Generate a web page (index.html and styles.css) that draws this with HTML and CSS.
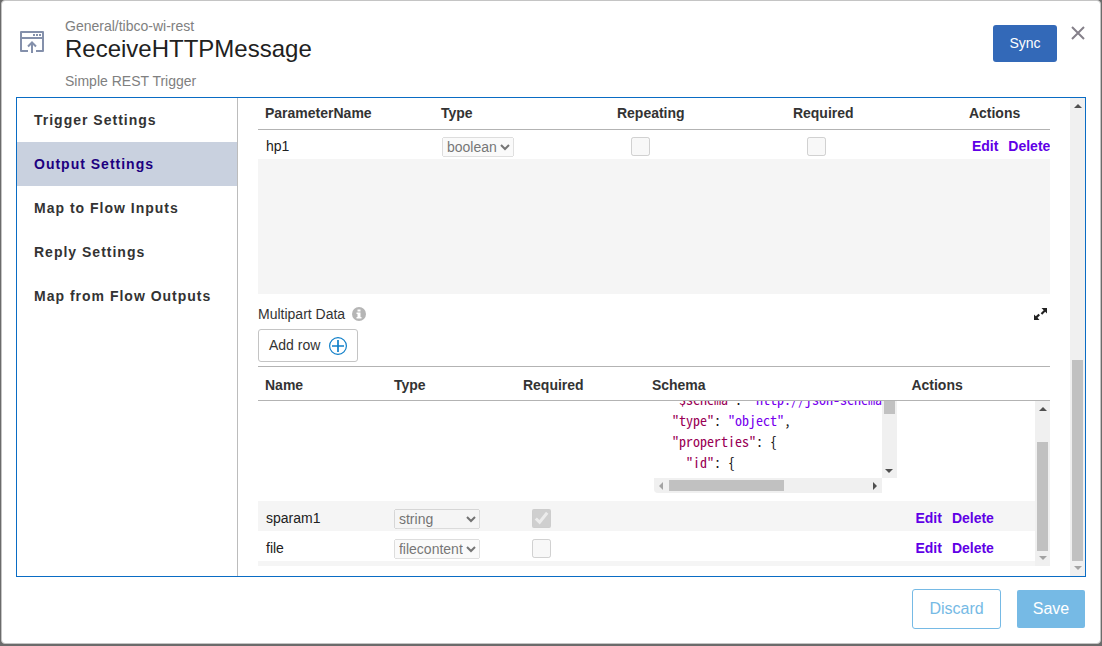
FILE: index.html
```html
<!DOCTYPE html>
<html lang="en">
<head>
<meta charset="utf-8">
<title>ReceiveHTTPMessage</title>
<link rel="stylesheet" href="styles.css">
</head>
<body>
<main class="modal">
  <header class="header">
    <svg class="trigger-icon" width="24" height="22" viewBox="0 0 24 22" fill="none" stroke="#8490ab">
      <path d="M8 20H1V1h22v19h-7M1 7h22" stroke-width="2" stroke-linejoin="round"/>
      <path d="M13 4h2M16 4h2M19 4h2" stroke-width="2"/>
      <path d="M12 22V11M8 15.500l4-4 4 4" stroke-width="2"/>
    </svg>
    <div class="titles">
      <div class="muted">General/tibco-wi-rest</div>
      <h1>ReceiveHTTPMessage</h1>
      <div class="muted">Simple REST Trigger</div>
    </div>
    <button class="sync">Sync</button>
    <button class="close" aria-label="Close">
      <svg width="14" height="14" viewBox="0 0 14 14" stroke="#85808a" stroke-width="2"><path d="M1 1l12 12M13 1L1 13"/></svg>
    </button>
  </header>

  <div class="panel">
    <nav class="nav">
      <button>Trigger Settings</button>
      <button class="selected">Output Settings</button>
      <button>Map to Flow Inputs</button>
      <button>Reply Settings</button>
      <button>Map from Flow Outputs</button>
    </nav>

    <section class="content">
      <div class="params">
        <table class="params-table">
          <colgroup><col class="wide"><col class="wide"><col class="wide"><col class="wide"><col></colgroup>
          <thead>
            <tr><th>ParameterName</th><th>Type</th><th>Repeating</th><th>Required</th><th>Actions</th></tr>
          </thead>
          <tbody>
            <tr>
              <td>hp1</td>
              <td class="field"><select aria-label="hp1 type" disabled><option>boolean</option></select></td>
              <td class="check"><input type="checkbox" aria-label="hp1 repeating" disabled></td>
              <td class="check"><input type="checkbox" aria-label="hp1 required" disabled></td>
              <td class="actions"><a href="#">Edit</a><a href="#">Delete</a></td>
            </tr>
          </tbody>
        </table>
      </div>

      <div class="section-title">
        <h2>Multipart Data</h2>
        <svg width="14" height="14" viewBox="0 0 14 14"><circle cx="7" cy="7" r="7" fill="#b5b5b5"/><path d="M5.500 2.500h3v2h-3zM4.500 5.500h4v4.500h1v1.500h-5V10h1V7h-1z" fill="#fff"/></svg>
        <button class="expand" aria-label="Expand">
          <svg width="13" height="12" viewBox="0 0 13 12"><path d="M7.500 0H13v5.500l-1.800-1.800-3 3-1.500-1.500 3-3zM0 6.500l1.800 1.800 2.700-2.600L6 7.200 3.500 9.800 5.500 12H0z" fill="#222"/></svg>
        </button>
      </div>
      <button class="add-row"><span>Add row</span>
        <svg width="18" height="18" viewBox="0 0 18 18" fill="none" stroke="#0f7fc9"><circle cx="9" cy="9" r="8.400" stroke-width="1.200"/><path d="M9 3v12M3 9h12" stroke-width="1.700"/></svg>
      </button>

      <div class="multi-head">
        <table class="multi-table">
          <colgroup><col class="sixth"><col class="sixth"><col class="sixth"><col class="third"><col></colgroup>
          <thead>
            <tr><th>Name</th><th>Type</th><th>Required</th><th>Schema</th><th>Actions</th></tr>
          </thead>
        </table>
      </div>
      <div class="multi-body">
        <table class="multi-table">
          <colgroup><col class="sixth"><col class="sixth"><col class="sixth"><col class="third"><col></colgroup>
          <tbody>
            <tr class="schema-row">
              <td></td><td></td><td></td>
              <td>
                <div class="editor">
                  <pre class="code"><code>  <b>"$schema"</b>: <i>"http://json-schema.org/draft-04/schema#"</i>,
  <b>"type"</b>: <i>"object"</i>,
  <b>"properties"</b>: {
    <b>"id"</b>: {</code></pre>
                  <div class="scroll-y editor-y"><span class="thumb"></span><span class="arrow down"></span></div>
                  <div class="scroll-x"><span class="arrow left off"></span><span class="thumb"></span><span class="arrow right"></span></div>
                </div>
              </td>
              <td></td>
            </tr>
            <tr class="striped">
              <td>sparam1</td>
              <td class="field"><select aria-label="sparam1 type" disabled><option>string</option><option>filecontent</option></select></td>
              <td class="check"><input type="checkbox" aria-label="sparam1 required" checked disabled></td>
              <td></td>
              <td class="actions"><a href="#">Edit</a><a href="#">Delete</a></td>
            </tr>
            <tr>
              <td>file</td>
              <td class="field"><select aria-label="file type" disabled><option>filecontent</option><option>string</option></select></td>
              <td class="check"><input type="checkbox" aria-label="file required" disabled></td>
              <td></td>
              <td class="actions"><a href="#">Edit</a><a href="#">Delete</a></td>
            </tr>
            <tr class="striped"><td></td><td></td><td></td><td></td><td></td></tr>
          </tbody>
        </table>
        <div class="scroll-y body-y"><span class="arrow up"></span><span class="thumb"></span><span class="arrow down off"></span></div>
      </div>
    </section>
    <div class="scroll-y panel-y"><span class="arrow up"></span><span class="thumb"></span><span class="arrow down off"></span></div>
  </div>

  <footer class="footer">
    <button class="discard">Discard</button>
    <button class="save">Save</button>
  </footer>
</main>
</body>
</html>
```
FILE: styles.css
```css
* { box-sizing: border-box; }

body {
  margin: 0;
  padding: 0 1px 2px;
  background: #6b6b6b;
  color: #333;
  font: 14px/16px "Liberation Sans", Arial, sans-serif;
}

button { font: inherit; color: inherit; background: none; border: 0; padding: 0; cursor: pointer; }
svg { display: block; flex: none; }

.modal {
  display: flex;
  flex-direction: column;
  min-height: calc(100vh - 2px);
  padding: 0 14px;
  background: #fff;
  border: 1px solid #c4c4c4;
  border-radius: 4px;
}

.header { display: flex; align-items: flex-start; padding: 17px 0 8px; }
.trigger-icon { margin: 13px 21px 0 4px; }
.titles { flex: 1; }
.muted { color: #808080; }
h1 { margin: 0 0 9px; font-size: 24px; line-height: 30px; font-weight: 400; color: #212121; }
.sync { width: 64px; height: 37px; margin-top: 7px; padding-bottom: 1px; border-radius: 3px; background: #3369b8; color: #fff; }
.close { margin: 8px 1px 0 14px; }

.panel { display: flex; flex: 1; border: 1px solid #0a6cc4; }
.nav { display: flex; flex-direction: column; width: 221px; border-right: 1px solid #bcbcbc; }
.nav button { height: 44px; padding-left: 17px; text-align: left; font-weight: 700; letter-spacing: 1px; }
.nav .selected { background: #c9d1df; color: #1d0080; }

.content { flex: 1; min-width: 0; padding: 0 20px 10px; }

table { width: 100%; table-layout: fixed; border-collapse: collapse; }
th { padding: 0 7px; text-align: left; font-weight: 700; white-space: nowrap; }
td { height: 30px; padding: 4px 0 0 8px; color: #212121; white-space: nowrap; }
.wide { width: 22.22%; }
.sixth { width: 16.6%; }
.third { width: 33.4%; }

.params { height: 196px; overflow: hidden; background: #f5f5f5; }
.params-table { background: #fff; }
.params-table th { height: 31px; }
.params-table thead tr { border-bottom: 1px solid #b3b3b3; }
.params-table .field { padding-left: 8px; }
.params-table .check { padding-left: 21px; }
.params-table .actions { padding-left: 10px; }

.field { padding-left: 7px; }
.check { padding-left: 16px; }
select { display: block; height: 20px; margin-top: 2px; font: inherit; }
select:disabled { color: #3c3c3c; }
input[type="checkbox"] { display: block; width: 19px; height: 19px; margin: 1px 0 0; }
.actions { padding-left: 11px; }
.actions a { margin-right: 10px; color: #5f00e6; font-weight: 700; text-decoration: none; }

.section-title { display: flex; align-items: center; gap: 7px; height: 35px; padding-top: 4px; }
h2 { margin: 0; font-size: 14px; font-weight: 400; }
.expand { margin: 0 3px 0 auto; }
.add-row {
  display: flex;
  align-items: center;
  gap: 9px;
  height: 33px;
  margin-bottom: 4px;
  padding: 0 10px;
  border: 1px solid #c4c4c4;
  border-radius: 3px;
}
.add-row span { padding-bottom: 2px; }

.multi-table { width: calc(100% - 15px); }
.multi-head { border: solid #b3b3b3; border-width: 1px 0; }
.multi-head th { height: 33px; padding-top: 3px; }
.multi-body { display: flex; height: 165px; overflow: hidden; align-items: flex-start; }
.striped { background: #f5f5f5; }
.schema-row td { height: 100px; padding: 0 0 0 9px; vertical-align: top; }

.editor { display: grid; grid-template-columns: 228px 15px; grid-template-rows: 77px 15px; }
.code {
  margin: 0;
  padding-left: 4px;
  overflow: hidden;
  color: #111;
  font: 14px/21px "Noto Sans Mono CJK SC", "DejaVu Sans Mono", monospace;
}
.code code { display: block; margin-top: -12px; font: inherit; }
.code b { color: #905; font-weight: 400; }
.code i { color: #70e; font-style: normal; }

.scroll-y { display: flex; flex-direction: column; align-items: center; width: 15px; background: #f0f0f0; }
.scroll-y .thumb { width: 11px; background: #c1c1c1; }
.scroll-x { display: flex; align-items: center; height: 15px; background: #f0f0f0; border-bottom-left-radius: 4px; }
.scroll-x .thumb { width: 115px; height: 11px; margin-left: 6px; background: #c1c1c1; }
.arrow { border: 4px solid transparent; color: #505050; }
.up { border-top: 0; border-bottom-color: currentColor; }
.down { border-bottom: 0; border-top-color: currentColor; }
.left { border-left: 0; border-right-color: currentColor; }
.right { border-right: 0; border-left-color: currentColor; }
.off { color: #a3a3a3; }
.scroll-x .left { margin-left: 5px; }
.scroll-x .right { margin: 0 5px 0 auto; }
.editor-y .thumb { height: 13px; }
.editor-y .down { margin: auto 0 5px; }
.body-y { align-self: stretch; }
.body-y .up, .panel-y .up { margin-top: 6px; }
.body-y .thumb { height: 109px; margin-top: 31px; }
.body-y .down, .panel-y .down { margin: auto 0 6px; }
.panel-y .thumb { height: 201px; margin: auto 0 0; }
.panel-y .down { margin-top: 5px; }

.footer { display: flex; justify-content: flex-end; gap: 16px; padding: 12px 1px 14px 0; font-size: 16px; }
.discard { width: 89px; height: 40px; border: 1px solid #76bae5; border-radius: 3px; color: #76bae5; }
.save { width: 68px; height: 38px; margin-top: 1px; border-radius: 2px; background: #76bae5; color: #fff; }
```
